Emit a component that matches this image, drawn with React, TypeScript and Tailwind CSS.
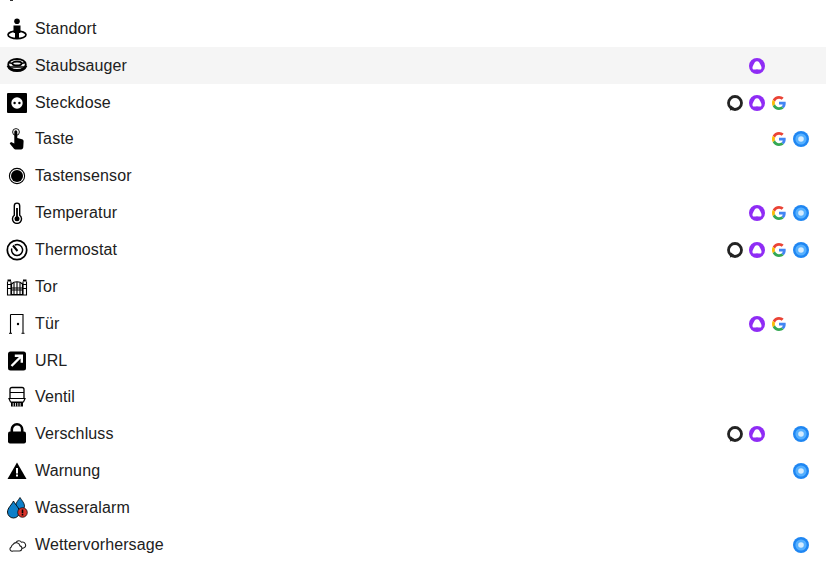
import type { ReactNode } from "react";

const AlexaRing = () => (
  <svg width="16" height="16" viewBox="0 0 16 16" className="block">
    <circle cx="8" cy="8" r="6.5" fill="none" stroke="#232323" strokeWidth="2.800" />
    <path d="M2.800 15.500 L4 10.500 L8.500 14 Z" fill="#232323" />
  </svg>
);

const PurpleAssistant = () => (
  <svg width="16" height="16" viewBox="0 0 16 16" className="block">
    <circle cx="8" cy="8" r="8" fill="#8f2cf5" />
    <path d="M8 3.200 C9.900 3.200 10.600 5 11.400 6.600 C12.200 8.200 13 9.600 12.300 10.900 C11.500 12.200 9.800 11.200 8 11.200 C6.200 11.200 4.500 12.200 3.700 10.900 C3 9.600 3.800 8.200 4.600 6.600 C5.400 5 6.100 3.200 8 3.200 Z" fill="#fff" />
  </svg>
);

const GoogleG = () => (
  <svg width="14" height="14" viewBox="0 0 48 48" className="block">
    <path fill="#EA4335" d="M24 9.500c3.500 0 6.700 1.300 9.100 3.500l6.800-6.800C35.800 2.400 30.300 0 24 0 14.600 0 6.500 5.400 2.600 13.200l7.900 6.200C12.400 13.700 17.700 9.500 24 9.500z" />
    <path fill="#4285F4" d="M47 24.500c0-1.600-.1-3.100-.4-4.500H24v9h12.900c-.6 3-2.200 5.500-4.700 7.200l7.600 5.900C44.300 37.900 47 31.800 47 24.500z" />
    <path fill="#FBBC05" d="M10.500 28.600c-.5-1.500-.8-3-.8-4.600s.3-3.200.8-4.600l-7.900-6.200C.9 16.500 0 20.100 0 24s.9 7.500 2.600 10.800l7.900-6.200z" />
    <path fill="#34A853" d="M24 48c6.500 0 11.900-2.100 15.800-5.900l-7.600-5.900c-2.100 1.400-4.900 2.300-8.200 2.300-6.300 0-11.600-4.200-13.500-9.900l-7.900 6.200C6.500 42.600 14.600 48 24 48z" />
  </svg>
);

const BlueDot = () => (
  <svg width="16" height="16" viewBox="0 0 16 16" className="block">
    <circle cx="8" cy="8" r="8" fill="#1f86f2" />
    <circle cx="8" cy="8" r="5.600" fill="#55b0ff" />
    <circle cx="8" cy="8" r="2.800" fill="#d4ecff" />
  </svg>
);

const iconBox = (children: ReactNode) => (
  <svg width="22" height="22" viewBox="0 0 22 22" className="block">
    {children}
  </svg>
);

const icons: Record<string, ReactNode> = {
  sitz: iconBox(<rect x="4" y="4" width="3" height="16" fill="#333" />),
  standort: iconBox(
    <>
      <circle cx="11" cy="3.200" r="2.800" fill="#000" />
      <path d="M7.500 7.500h7v7.500h-1.500v5h-4v-5H7.500z" fill="#000" />
      <ellipse cx="11" cy="16.800" rx="9" ry="3.800" fill="none" stroke="#000" strokeWidth="1.700" />
    </>,
  ),
  staubsauger: iconBox(
    <>
      <ellipse cx="11" cy="9.500" rx="8.800" ry="5.500" fill="none" stroke="#000" strokeWidth="1.800" />
      <ellipse cx="11" cy="8.500" rx="4.500" ry="2" fill="none" stroke="#000" strokeWidth="1.800" />
      <path d="M1.800 10.500 C4.500 17.500 17.500 17.500 20.200 10.500" fill="none" stroke="#000" strokeWidth="2.400" />
      <path d="M2.500 7.500 L6.500 8.500 M19.500 7.500 L15.500 8.500 M3.500 12h15" stroke="#000" strokeWidth="1.300" />
    </>,
  ),
  steckdose: iconBox(
    <>
      <rect x="1" y="1" width="20" height="20" rx="1" fill="#000" />
      <circle cx="11" cy="11" r="5.700" fill="#fff" />
      <circle cx="8.600" cy="11" r="1.200" fill="#000" />
      <circle cx="13.400" cy="11" r="1.200" fill="#000" />
    </>,
  ),
  taste: iconBox(
    <>
      <circle cx="10" cy="4" r="3.400" fill="none" stroke="#000" strokeWidth="0.900" />
      <path d="M8.300 3.800a1.500 1.500 0 0 1 3 0v6.200l4.700 1.300c1 .3 1.600 1 1.600 2L17.300 19c-.1 1.300-.9 2.500-2.200 2.500H9.500c-.6 0-1.100-.2-1.500-.7L3.700 15.500l1.300-1.600 3.300 1.500z" fill="#000" />
    </>,
  ),
  tastensensor: iconBox(
    <>
      <circle cx="11" cy="11" r="7.600" fill="none" stroke="#000" strokeWidth="1.100" />
      <circle cx="11" cy="11" r="6" fill="#000" />
    </>,
  ),
  temperatur: iconBox(
    <>
      <path d="M8.300 3.800a2.700 2.700 0 0 1 5.400 0v9.500a4.500 4.500 0 1 1-5.400 0z" fill="none" stroke="#000" strokeWidth="1.400" />
      <circle cx="11" cy="16.800" r="2.500" fill="#000" />
      <rect x="10.100" y="6" width="1.800" height="9" fill="#000" />
    </>,
  ),
  thermostat: iconBox(
    <>
      <circle cx="11" cy="11" r="9.700" fill="none" stroke="#000" strokeWidth="1.700" />
      <path d="M5.800 9.500a5.500 5.500 0 1 0 3-3.500" fill="none" stroke="#000" strokeWidth="1.500" />
      <path d="M7 6.500 L11.500 12" stroke="#000" strokeWidth="2" />
    </>,
  ),
  tor: iconBox(
    <>
      <path d="M1.500 5.500v14M5 5.500v14M17 5.500v14M20.500 5.500v14M1 8.500h4.500M16.500 8.500h4M1 12.500h4.500M16.500 12.500h4M1 19h20" stroke="#000" strokeWidth="1.100" fill="none" />
      <path d="M5.500 8C8.500 5 13.500 5 16.500 8v10.500h-11z" fill="none" stroke="#000" strokeWidth="1.200" />
      <path d="M8 7v11.500M11 6v12.500M14 7v11.500M5.500 12h11M5.500 14h11" stroke="#000" strokeWidth="1.100" />
      <path d="M1.500 3.500h3.500v2h-3.500zM17 3.500h3.500v2H17z" fill="#000" />
    </>,
  ),
  tuer: iconBox(
    <>
      <path d="M4.500 1.500h12.500v18.500M4.500 1.500v18.800" fill="none" stroke="#000" strokeWidth="1.100" />
      <path d="M3 20.300h3M15.500 20.300h3" stroke="#000" strokeWidth="1" />
      <circle cx="12" cy="11" r="1.200" fill="#000" />
    </>,
  ),
  url: iconBox(
    <>
      <rect x="2" y="1.500" width="18" height="19" rx="2.500" fill="#000" />
      <path d="M5.500 16L14.500 7M8.800 5.800h7v7" fill="none" stroke="#fff" strokeWidth="2.400" />
    </>,
  ),
  ventil: iconBox(
    <>
      <path d="M4 12V3.500c0-1.200.8-2 2-2h10c1.200 0 2 .8 2 2V12" fill="none" stroke="#000" strokeWidth="1.300" />
      <path d="M4 6.500h14M3 12.500h16l-1.500 3.500h-13z" fill="none" stroke="#000" strokeWidth="1.200" />
      <rect x="5" y="16" width="12" height="4.500" fill="#000" />
      <path d="M7.200 17v3.500M9.500 17v3.500M11.800 17v3.500M14.200 17v3.500" stroke="#fff" strokeWidth="0.800" />
    </>,
  ),
  verschluss: iconBox(
    <>
      <path d="M5.800 9V6.500a5.200 5.200 0 0 1 10.400 0V9" fill="none" stroke="#000" strokeWidth="2.600" />
      <rect x="2" y="8.500" width="18" height="12" rx="2" fill="#000" />
    </>,
  ),
  warnung: iconBox(
    <>
      <path d="M11 2.500L20.500 19H1.500z" fill="#000" />
      <rect x="10" y="8" width="2" height="5.500" fill="#fff" />
      <rect x="10" y="14.500" width="2" height="2" fill="#fff" />
    </>,
  ),
  wasseralarm: iconBox(
    <>
      <path d="M14 .5C15.800 3.500 18.500 6 18.500 9a4.500 4.500 0 0 1-9 0c0-3 2.700-5.500 4.500-8.500z" fill="#0e7fc8" stroke="#000" strokeWidth="0.800" />
      <path d="M7.500 4C9.500 8 13.500 11 13.500 15a6 6 0 0 1-12 0C1.500 11 5.500 8 7.500 4z" fill="#0e7fc8" stroke="#000" strokeWidth="0.900" />
      <circle cx="16.500" cy="15.500" r="4.800" fill="#d9342b" stroke="#000" strokeWidth="0.700" />
      <rect x="15.700" y="12.500" width="1.600" height="3.800" fill="#000" />
      <rect x="15.700" y="17" width="1.600" height="1.500" fill="#000" />
    </>,
  ),
  wetter: iconBox(
    <>
      <path d="M7 17h6.500a2.600 2.600 0 0 0 .5-5.100A3.800 3.800 0 0 0 7 10.500 3.300 3.300 0 0 0 5.300 13 2.100 2.100 0 0 0 7 17z" fill="none" stroke="#222" strokeWidth="1.100" />
      <path d="M10 8.500A3.200 3.200 0 0 1 15.500 8.200 2.700 2.700 0 0 1 17.500 14l-1.500.5" fill="none" stroke="#222" strokeWidth="1.100" />
    </>,
  ),
};

type Row = {
  label: string;
  icon: string;
  ring?: boolean;
  purple?: boolean;
  google?: boolean;
  blue?: boolean;
  active?: boolean;
};

const rows: Row[] = [
  { label: "Sitzheizung", icon: "sitz" },
  { label: "Standort", icon: "standort" },
  { label: "Staubsauger", icon: "staubsauger", purple: true, active: true },
  { label: "Steckdose", icon: "steckdose", ring: true, purple: true, google: true },
  { label: "Taste", icon: "taste", google: true, blue: true },
  { label: "Tastensensor", icon: "tastensensor" },
  { label: "Temperatur", icon: "temperatur", purple: true, google: true, blue: true },
  { label: "Thermostat", icon: "thermostat", ring: true, purple: true, google: true, blue: true },
  { label: "Tor", icon: "tor" },
  { label: "Tür", icon: "tuer", purple: true, google: true },
  { label: "URL", icon: "url" },
  { label: "Ventil", icon: "ventil" },
  { label: "Verschluss", icon: "verschluss", ring: true, purple: true, blue: true },
  { label: "Warnung", icon: "warnung", blue: true },
  { label: "Wasseralarm", icon: "wasseralarm" },
  { label: "Wettervorhersage", icon: "wetter", blue: true },
];

function Slot({ children }: { children?: ReactNode }) {
  return <div className="flex w-[22px] justify-center">{children}</div>;
}

export default function App() {
  return (
    <div className="h-[568px] w-[826px] overflow-hidden bg-white font-['Liberation_Sans',Arial,sans-serif] text-base text-[#212121]">
      <div className="mt-[-26.45px]">
        {rows.map((row) => (
          <div
            key={row.label}
            className={`flex h-[36.86px] items-center pl-[6px] pr-[14px] ${row.active ? "bg-[#f5f5f5]" : ""}`}
          >
            <div className="mr-[7px] w-[22px]">{icons[row.icon]}</div>
            <span className="flex-1 tracking-[0.12px]">{row.label}</span>
            <div className="flex items-center">
              <Slot>{row.ring && <AlexaRing />}</Slot>
              <Slot>{row.purple && <PurpleAssistant />}</Slot>
              <Slot>{row.google && <GoogleG />}</Slot>
              <Slot>{row.blue && <BlueDot />}</Slot>
            </div>
          </div>
        ))}
      </div>
    </div>
  );
}
